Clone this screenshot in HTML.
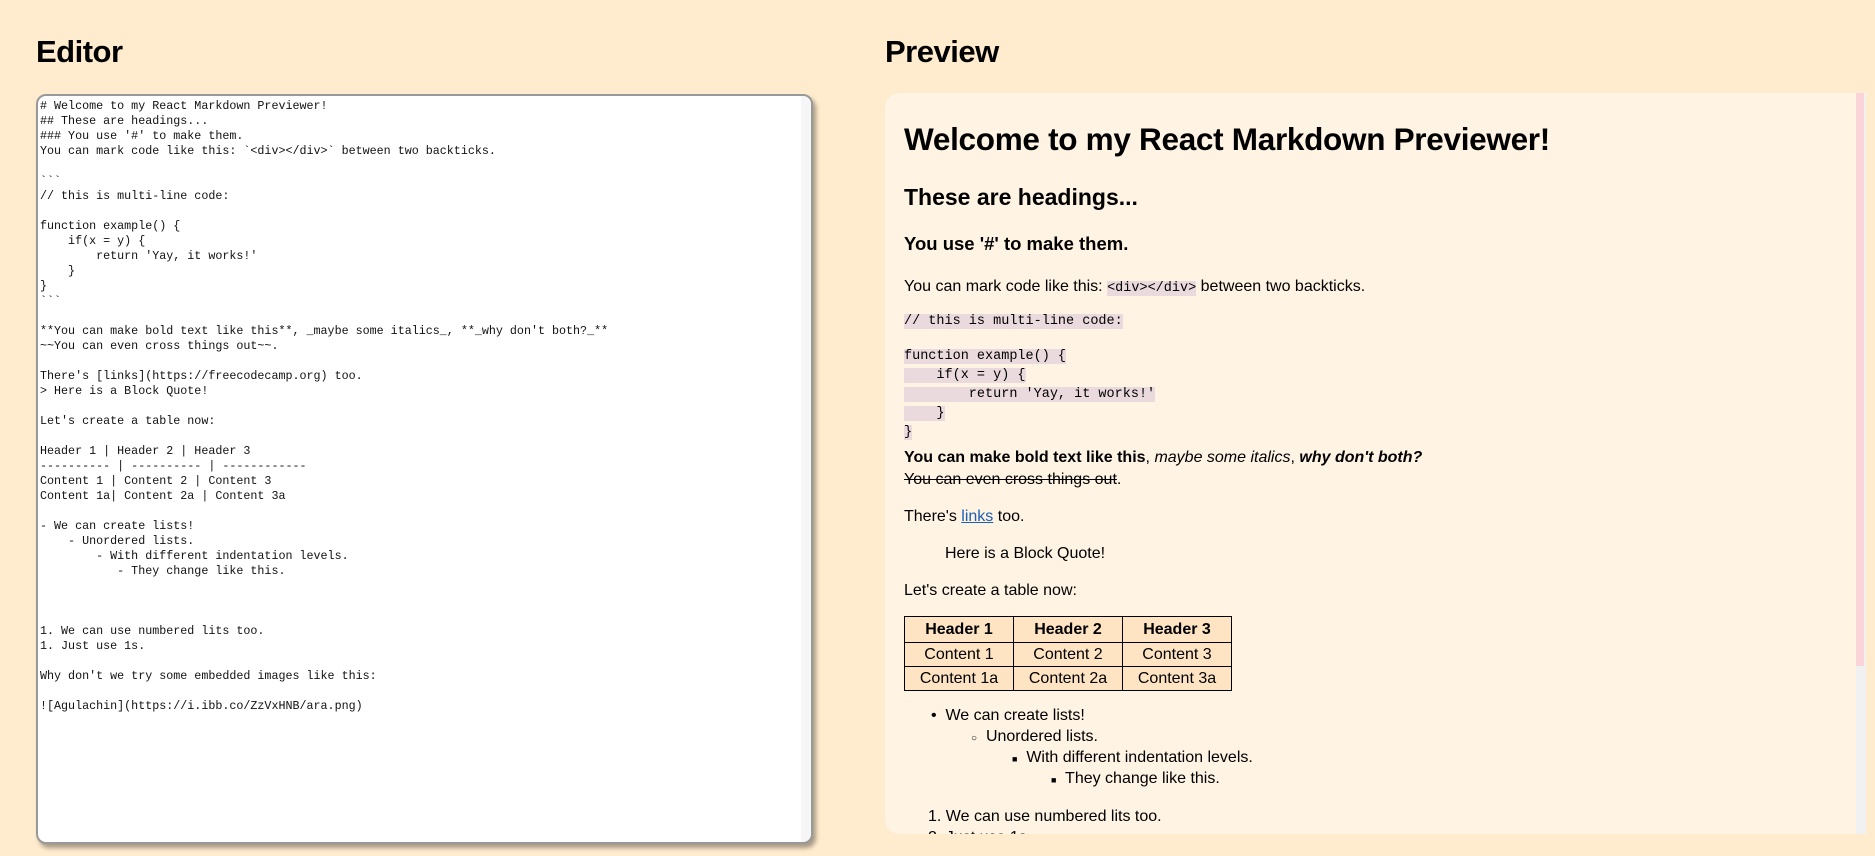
<!DOCTYPE html>
<html><head><meta charset="utf-8"><style>
*{margin:0;padding:0;box-sizing:border-box}
html,body{width:1875px;height:856px;overflow:hidden;background:#ffebcd;font-family:"Liberation Sans",sans-serif;color:#000}
.h{position:absolute;top:34px;font-size:31px;font-weight:bold;letter-spacing:-0.5px}
#ed{position:absolute;left:36px;top:94px;width:777px;height:750px;background:#fff;border:2px solid #999;border-radius:10px;box-shadow:3px 4px 5px rgba(0,0,0,.35);overflow:hidden}
#ed pre{position:absolute;left:2px;top:3px;font-family:"Liberation Mono",monospace;font-size:11.7px;line-height:15px;color:#111}
#ed .sb{position:absolute;right:0;top:0;width:10px;height:100%;background:#f6f6f6}
#pv{position:absolute;left:885px;top:93px;width:981px;height:741px;background:#fff3e3;border-radius:14px 0 0 14px;overflow:hidden}
#pv .tr{position:absolute;right:0;top:0;width:10px;height:100%;background:#f1f1f1}
#pv .th{position:absolute;right:2px;top:0;width:8px;height:573px;background:#fad4d8}
.a{position:absolute;left:19px;white-space:nowrap;font-size:16px;line-height:20px}
code,.c{font-family:"Liberation Mono",monospace;font-size:13.5px;background:#eadadd;white-space:pre}
table{position:absolute;left:19px;top:523px;border-collapse:collapse;background:#ffe4c4;font-size:16px}
td,th{border:1.5px solid #000;width:109px;text-align:center;height:24px;padding:0}
th{height:26px}
</style></head><body>
<div class="h" style="left:36px">Editor</div>
<div class="h" style="left:885px">Preview</div>
<div id="ed"><pre># Welcome to my React Markdown Previewer!
## These are headings...
### You use '#' to make them.
You can mark code like this: &#96;&lt;div&gt;&lt;/div&gt;&#96; between two backticks.

&#96;&#96;&#96;
// this is multi-line code:

function example() {
    if(x = y) {
        return 'Yay, it works!'
    }
}
&#96;&#96;&#96;

**You can make bold text like this**, _maybe some italics_, **_why don't both?_**
~~You can even cross things out~~.

There's [links](https://freecodecamp.org) too.
&gt; Here is a Block Quote!

Let's create a table now:

Header 1 | Header 2 | Header 3
---------- | ---------- | ------------
Content 1 | Content 2 | Content 3
Content 1a| Content 2a | Content 3a

- We can create lists!
    - Unordered lists.
        - With different indentation levels.
           - They change like this.



1. We can use numbered lits too.
1. Just use 1s.

Why don't we try some embedded images like this:

![Agulachin](https://i.ibb.co/ZzVxHNB/ara.png)</pre><div class="sb"></div></div>
<div id="pv">
<div class="a" style="top:26px;font-size:31.5px;line-height:40px;font-weight:bold;letter-spacing:-0.3px">Welcome to my React Markdown Previewer!</div>
<div class="a" style="top:90px;font-size:23px;line-height:28px;font-weight:bold">These are headings...</div>
<div class="a" style="top:140px;font-size:18.5px;line-height:22px;font-weight:bold">You use '#' to make them.</div>
<div class="a" style="top:184px">You can mark code like this: <code>&lt;div&gt;&lt;/div&gt;</code> between two backticks.</div>
<div class="a" style="top:217px"><span class="c">// this is multi-line code:</span></div>
<div class="a" style="top:253px;line-height:17px;font-size:13.5px"><span class="c">function example() {</span><br><span class="c">    if(x = y) {</span><br><span class="c">        return 'Yay, it works!'</span><br><span class="c">    }</span><br><span class="c">}</span></div>
<div class="a" style="top:355px"><b>You can make bold text like this</b>, <i>maybe some italics</i>, <b><i>why don't both?</i></b></div>
<div class="a" style="top:377px"><s>You can even cross things out</s>.</div>
<div class="a" style="top:414px">There's <a style="color:#1a5fb4;text-decoration:underline">links</a> too.</div>
<div class="a" style="top:451px;left:60px">Here is a Block Quote!</div>
<div class="a" style="top:488px">Let's create a table now:</div>
<table><tr><th>Header 1</th><th>Header 2</th><th>Header 3</th></tr>
<tr><td>Content 1</td><td>Content 2</td><td>Content 3</td></tr>
<tr><td>Content 1a</td><td>Content 2a</td><td>Content 3a</td></tr></table>
<div class="a" style="top:613px;left:46px">•&nbsp; We can create lists!</div>
<div class="a" style="top:634px;left:86px"><span style="font-size:10px">○</span>&nbsp; Unordered lists.</div>
<div class="a" style="top:655px;left:127px"><span style="font-size:9px">■</span>&nbsp; With different indentation levels.</div>
<div class="a" style="top:676px;left:166px"><span style="font-size:9px">■</span>&nbsp; They change like this.</div>
<div class="a" style="top:714px;left:43px">1. We can use numbered lits too.</div>
<div class="a" style="top:735px;left:43px">2. Just use 1s.</div>
<div class="tr"></div><div class="th"></div>
</div>
</body></html>
